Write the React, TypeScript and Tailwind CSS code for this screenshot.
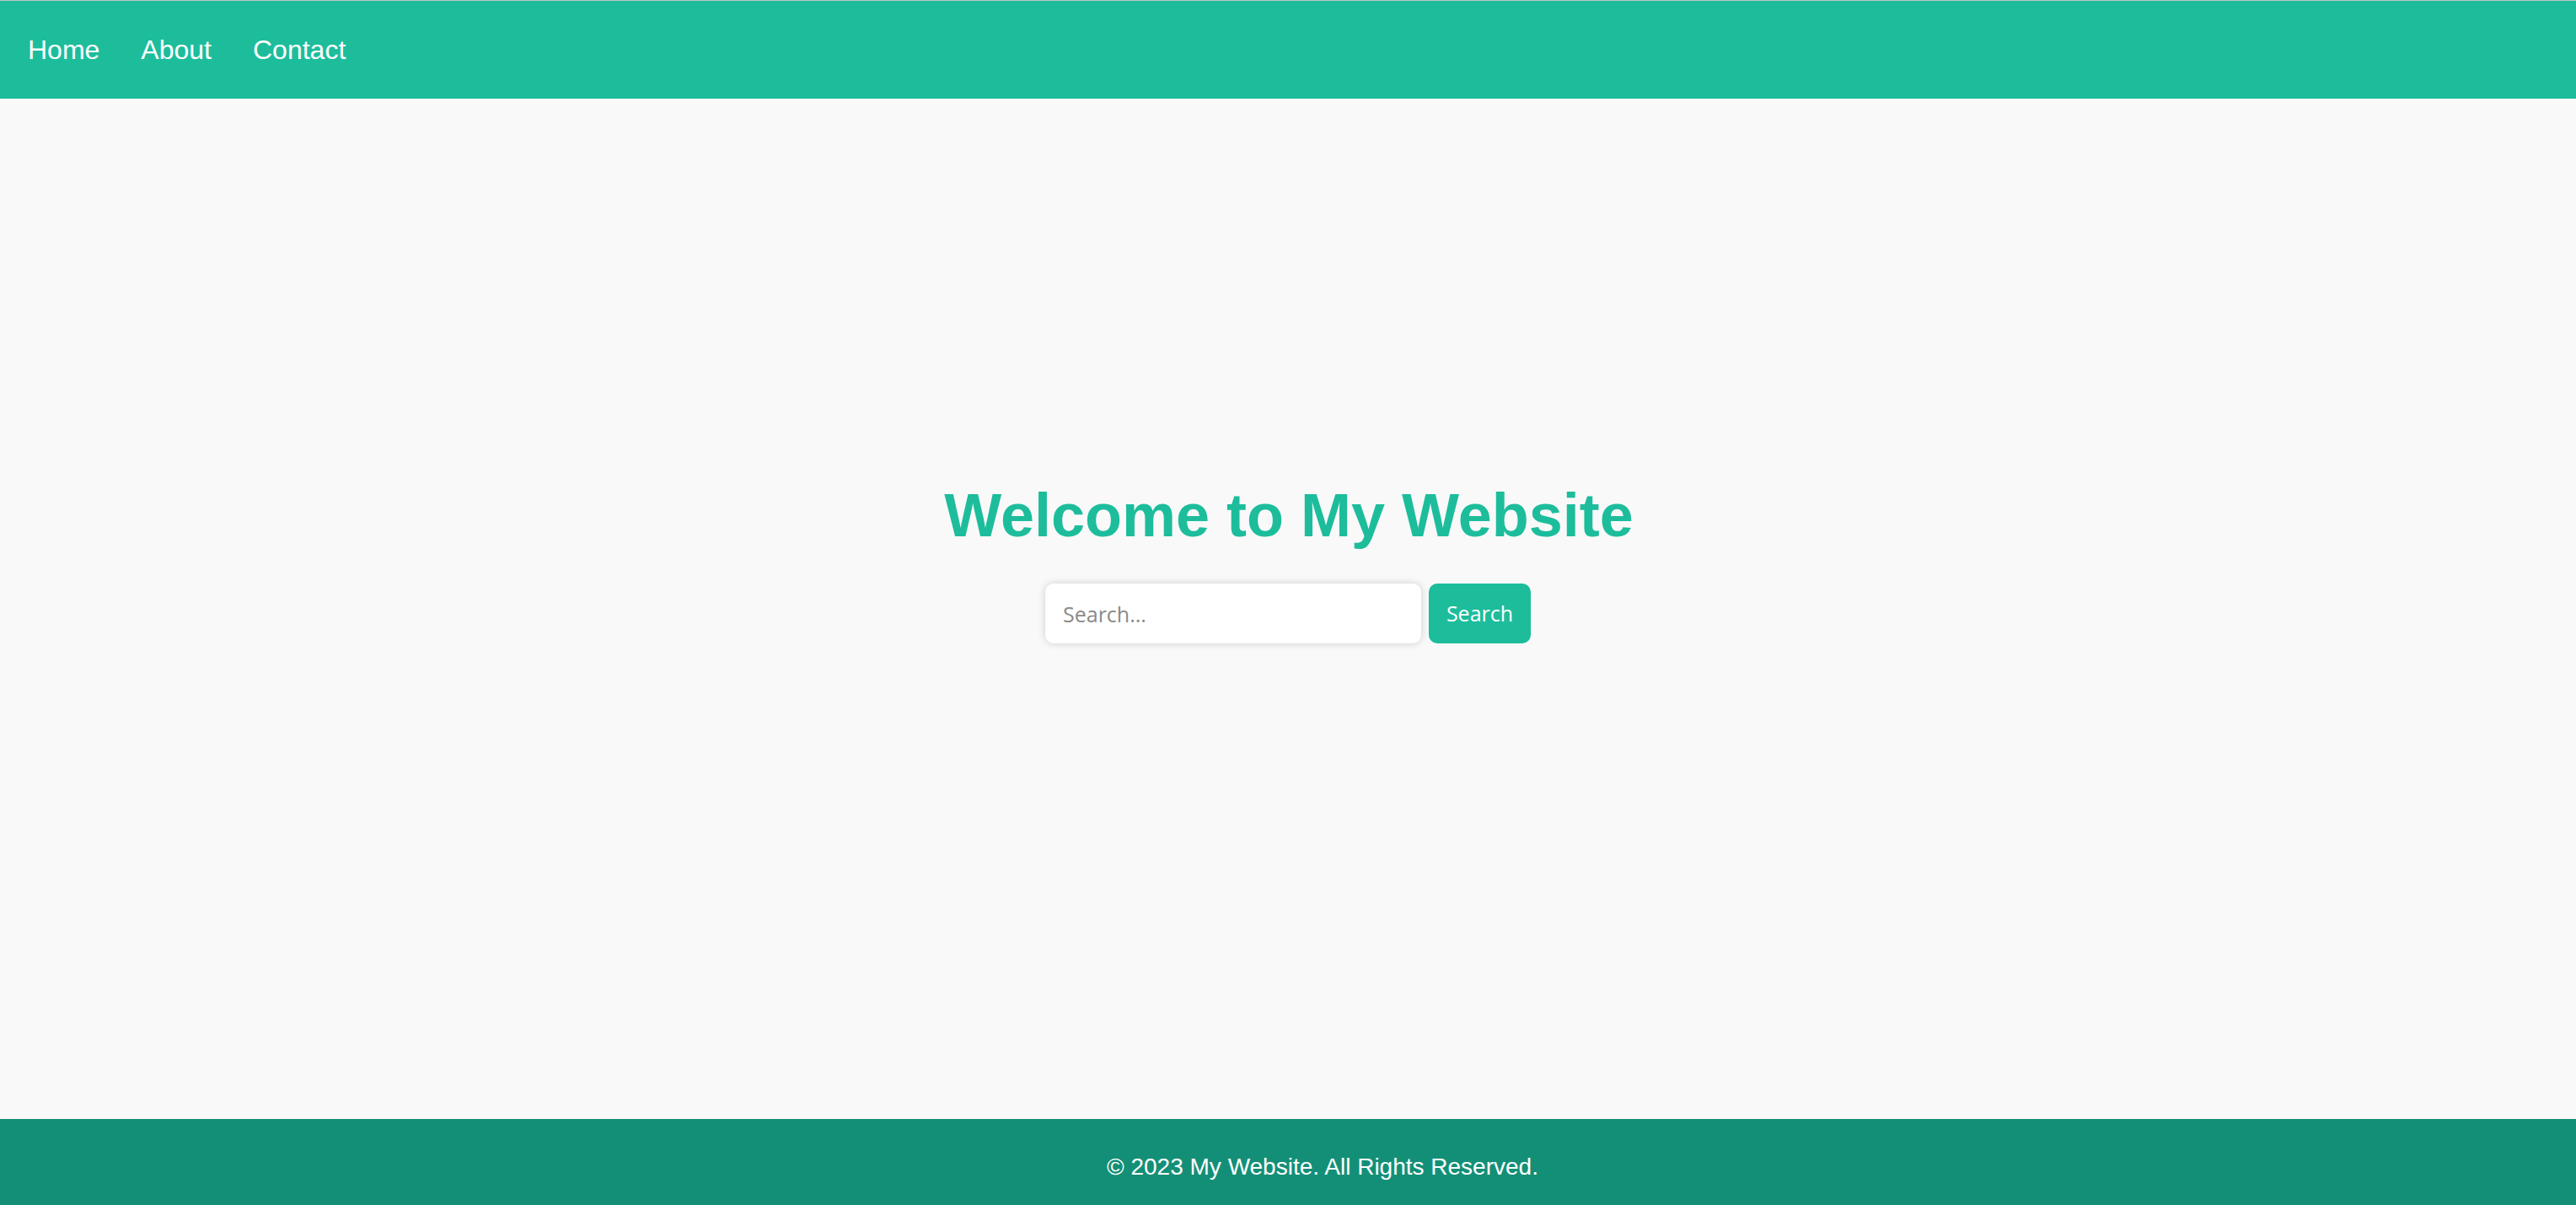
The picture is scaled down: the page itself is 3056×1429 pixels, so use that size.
import React from "react";

export default function App() {
  return (
    <div
      className="flex h-[1429px] flex-col bg-[#f9f9f9]"
      style={{ fontFamily: '"Liberation Sans", Arial, sans-serif' }}
    >
      <nav className="flex h-[117px] shrink-0 items-center gap-[49px] border-t border-[#c4c4c4] bg-[#1dbd9c] pl-[33px] text-[32px] text-white">
        <a href="#" className="leading-none">Home</a>
        <a href="#" className="leading-none">About</a>
        <a href="#" className="leading-none">Contact</a>
      </nav>
      <main className="flex flex-1 flex-col items-center justify-center pb-[106px]">
        <h1 className="pl-[2px] text-[72px] font-bold leading-[72px] text-[#1dbd9c]">
          Welcome to My Website
        </h1>
        <div
          className="mt-[45px] flex gap-[9px]"
          style={{ fontFamily: '"Open Sans", "Noto Sans", sans-serif' }}
        >
          <input
            type="text"
            placeholder="Search..."
            className="h-[71px] w-[446px] rounded-[10px] bg-white px-[21px] text-[25px] text-[#333] shadow-[0_0_10px_rgba(0,0,0,0.18)] outline-none placeholder:text-[#8a8a8a]"
          />
          <button className="h-[71px] w-[121px] rounded-[10px] bg-[#1dbd9c] text-[25px] text-white">
            Search
          </button>
        </div>
      </main>
      <footer className="flex h-[102px] shrink-0 items-center justify-center bg-[#148f77] pl-[82px] pt-[12px] text-[28px] text-white">
        © 2023 My Website. All Rights Reserved.
      </footer>
    </div>
  );
}
